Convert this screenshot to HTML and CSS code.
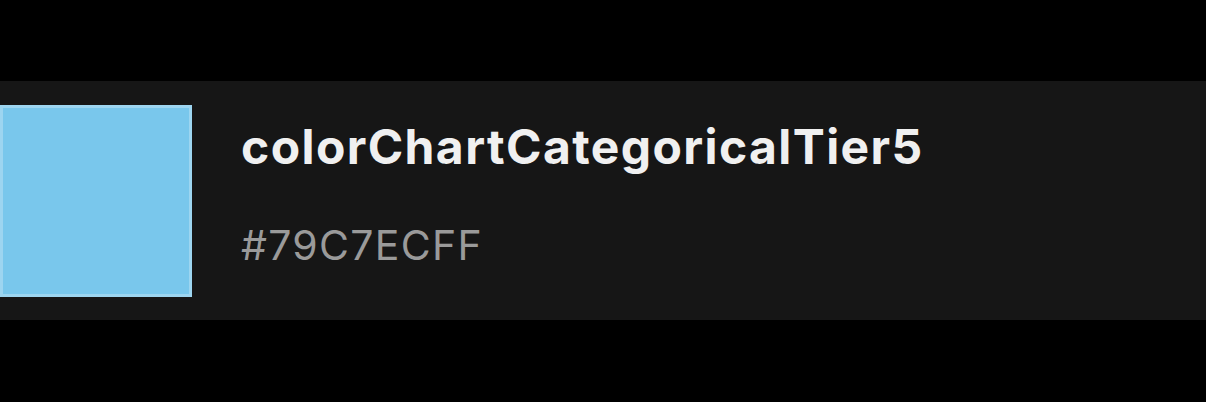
FILE: index.html
```html
<!DOCTYPE html>
<html>
<head>
<meta charset="utf-8">
<link rel="stylesheet" href="styles.css">
</head>
<body>
<div class="page">
  <div class="card">
    <div class="swatch"></div>
    <div class="info">
      <div class="name">colorChartCategoricalTier5</div>
      <div class="hex">#79C7ECFF</div>
    </div>
  </div>
</div>
</body>
</html>
```
FILE: styles.css
```css
html, body {
  margin: 0;
  padding: 0;
  background: #000;
}
.page {
  width: 1206px;
  height: 402px;
  padding-top: 81px;
  box-sizing: border-box;
}
.card {
  height: 239px;
  background: #161616;
  display: flex;
  align-items: center;
  gap: 49px;
}
.swatch {
  width: 192px;
  height: 192px;
  box-sizing: border-box;
  background: #79c7ec;
  border: 3px solid #9dd5f0;
}
.info {
  display: flex;
  flex-direction: column;
  font-family: Inter, "Noto Sans", sans-serif;
  padding-bottom: 12px;
}
.name {
  font-size: 48px;
  font-weight: 700;
  color: #f0f0f0;
  line-height: 1;
  letter-spacing: 1.4px;
}
.hex {
  font-size: 41px;
  font-weight: 400;
  color: #9a9a9a;
  line-height: 1;
  margin-top: 54px;
  letter-spacing: 1.3px;
}
```
